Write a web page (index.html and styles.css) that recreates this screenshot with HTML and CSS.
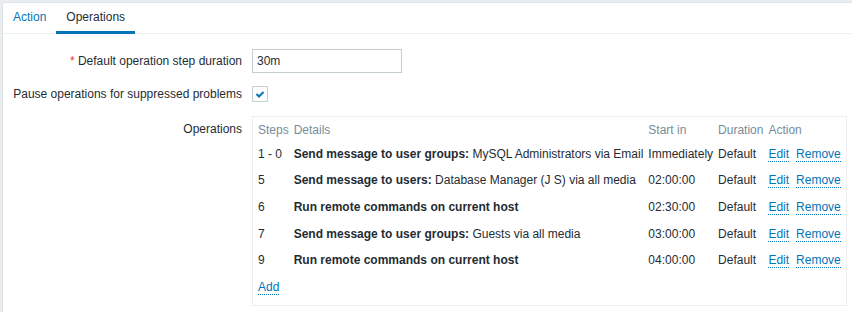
FILE: index.html
```html
<!DOCTYPE html>
<html lang="en">
<head>
    <meta charset="UTF-8">
    <title>Action operations</title>
    <link rel="stylesheet" href="styles.css">
</head>
<body>
    <div class="panel">
        <ul class="tabs">
            <li class="tab"><a href="#">Action</a></li>
            <li class="tab active">Operations</li>
        </ul>

        <div class="form">
            <label class="form-label" for="esc_period"><span class="required">*</span> Default operation step duration</label>
            <div class="form-field">
                <input type="text" id="esc_period" class="text-input" value="30m">
            </div>

            <label class="form-label">Pause operations for suppressed problems</label>
            <div class="form-field">
                <span class="checkbox">
                    <svg width="16" height="16" viewBox="0 0 16 16"><polyline points="4.5,8 7,10.5 11.5,6" fill="none" stroke="#0275b8" stroke-width="2"/></svg>
                </span>
            </div>

            <label class="form-label label-top">Operations</label>
            <div class="form-field field-top">
                <div class="separator">
                    <table class="op-table">
                        <thead>
                            <tr>
                                <th>Steps</th>
                                <th>Details</th>
                                <th>Start in</th>
                                <th>Duration</th>
                                <th>Action</th>
                            </tr>
                        </thead>
                        <tbody>
                            <tr>
                                <td>1 - 0</td>
                                <td><b>Send message to user groups:</b> MySQL Administrators via Email</td>
                                <td>Immediately</td>
                                <td>Default</td>
                                <td><a href="#" class="link">Edit</a><a href="#" class="link">Remove</a></td>
                            </tr>
                            <tr>
                                <td>5</td>
                                <td><b>Send message to users:</b> Database Manager (J S) via all media</td>
                                <td>02:00:00</td>
                                <td>Default</td>
                                <td><a href="#" class="link">Edit</a><a href="#" class="link">Remove</a></td>
                            </tr>
                            <tr>
                                <td>6</td>
                                <td><b>Run remote commands on current host</b></td>
                                <td>02:30:00</td>
                                <td>Default</td>
                                <td><a href="#" class="link">Edit</a><a href="#" class="link">Remove</a></td>
                            </tr>
                            <tr>
                                <td>7</td>
                                <td><b>Send message to user groups:</b> Guests via all media</td>
                                <td>03:00:00</td>
                                <td>Default</td>
                                <td><a href="#" class="link">Edit</a><a href="#" class="link">Remove</a></td>
                            </tr>
                            <tr>
                                <td>9</td>
                                <td><b>Run remote commands on current host</b></td>
                                <td>04:00:00</td>
                                <td>Default</td>
                                <td><a href="#" class="link">Edit</a><a href="#" class="link">Remove</a></td>
                            </tr>
                        </tbody>
                        <tfoot>
                            <tr>
                                <td colspan="5"><a href="#" class="link">Add</a></td>
                            </tr>
                        </tfoot>
                    </table>
                </div>
            </div>
        </div>
    </div>
</body>
</html>
```

FILE: styles.css
```css
:root {
    --text-color: #1f2c33;
    --muted-color: #768d99;
    --link-color: #0275b8;
    --line-color: #ebeef0;
    --input-border: #c5ced3;
    --required-color: #e33734;
}

* {
    box-sizing: border-box;
    margin: 0;
    padding: 0;
}

html, body {
    height: 100%;
}

body {
    font-family: "Liberation Sans", Arial, sans-serif;
    font-size: 12px;
    line-height: 14px;
    color: var(--text-color);
    background-color: #ebeef0;
    overflow: hidden;
}

.panel {
    margin: 2px 0 0 2px;
    height: calc(100% - 2px);
    background-color: #fff;
    border-top: 1px solid #dfe4e7;
    border-left: 1px solid #dfe4e7;
}

/* tabs */
.tabs {
    display: flex;
    list-style: none;
    height: 31px;
    border-bottom: 1px solid var(--line-color);
}

.tab {
    padding: 7px 10px;
    height: 31px;
    border-bottom: 3px solid transparent;
}

.tab a {
    color: var(--link-color);
    text-decoration: none;
}

.tab.active {
    border-bottom-color: var(--link-color);
}

/* form */
.form {
    display: grid;
    grid-template-columns: 229px 1fr;
    column-gap: 10px;
    row-gap: 9px;
    padding: 15px 0 0 10px;
    align-items: center;
}

.form-label {
    text-align: right;
    white-space: nowrap;
}

.label-top {
    align-self: start;
    margin-top: 7px;
}

.field-top {
    margin-top: 1px;
}

.form-field {
    display: flex;
    align-items: center;
    min-height: 24px;
}

.required {
    color: var(--required-color);
}

.text-input {
    width: 150px;
    height: 24px;
    padding: 0 4px;
    border: 1px solid var(--input-border);
    font-family: inherit;
    font-size: 12px;
    color: var(--text-color);
    outline: none;
}

.checkbox {
    display: block;
    width: 16px;
    height: 16px;
    border: 1px solid var(--input-border);
    position: relative;
}

.checkbox svg {
    position: absolute;
    left: -1px;
    top: -1px;
}

/* operations list */
.separator {
    display: inline-block;
    padding: 5px;
    border: 1px solid var(--line-color);
}

.op-table {
    border-collapse: collapse;
}

.op-table th {
    font-weight: normal;
    text-align: left;
    color: var(--muted-color);
    padding: 1px 5px 2.5px 0;
    line-height: 15px;
    white-space: nowrap;
}

.op-table td {
    height: 26.6px;
    padding: 6px 5px 6px 0;
    white-space: nowrap;
}

.op-table th:last-child,
.op-table td:last-child {
    padding-right: 0;
}

.link {
    color: var(--link-color);
    text-decoration: none;
    border-bottom: 1px dotted var(--link-color);
}

.link + .link {
    margin-left: 7px;
}
```
